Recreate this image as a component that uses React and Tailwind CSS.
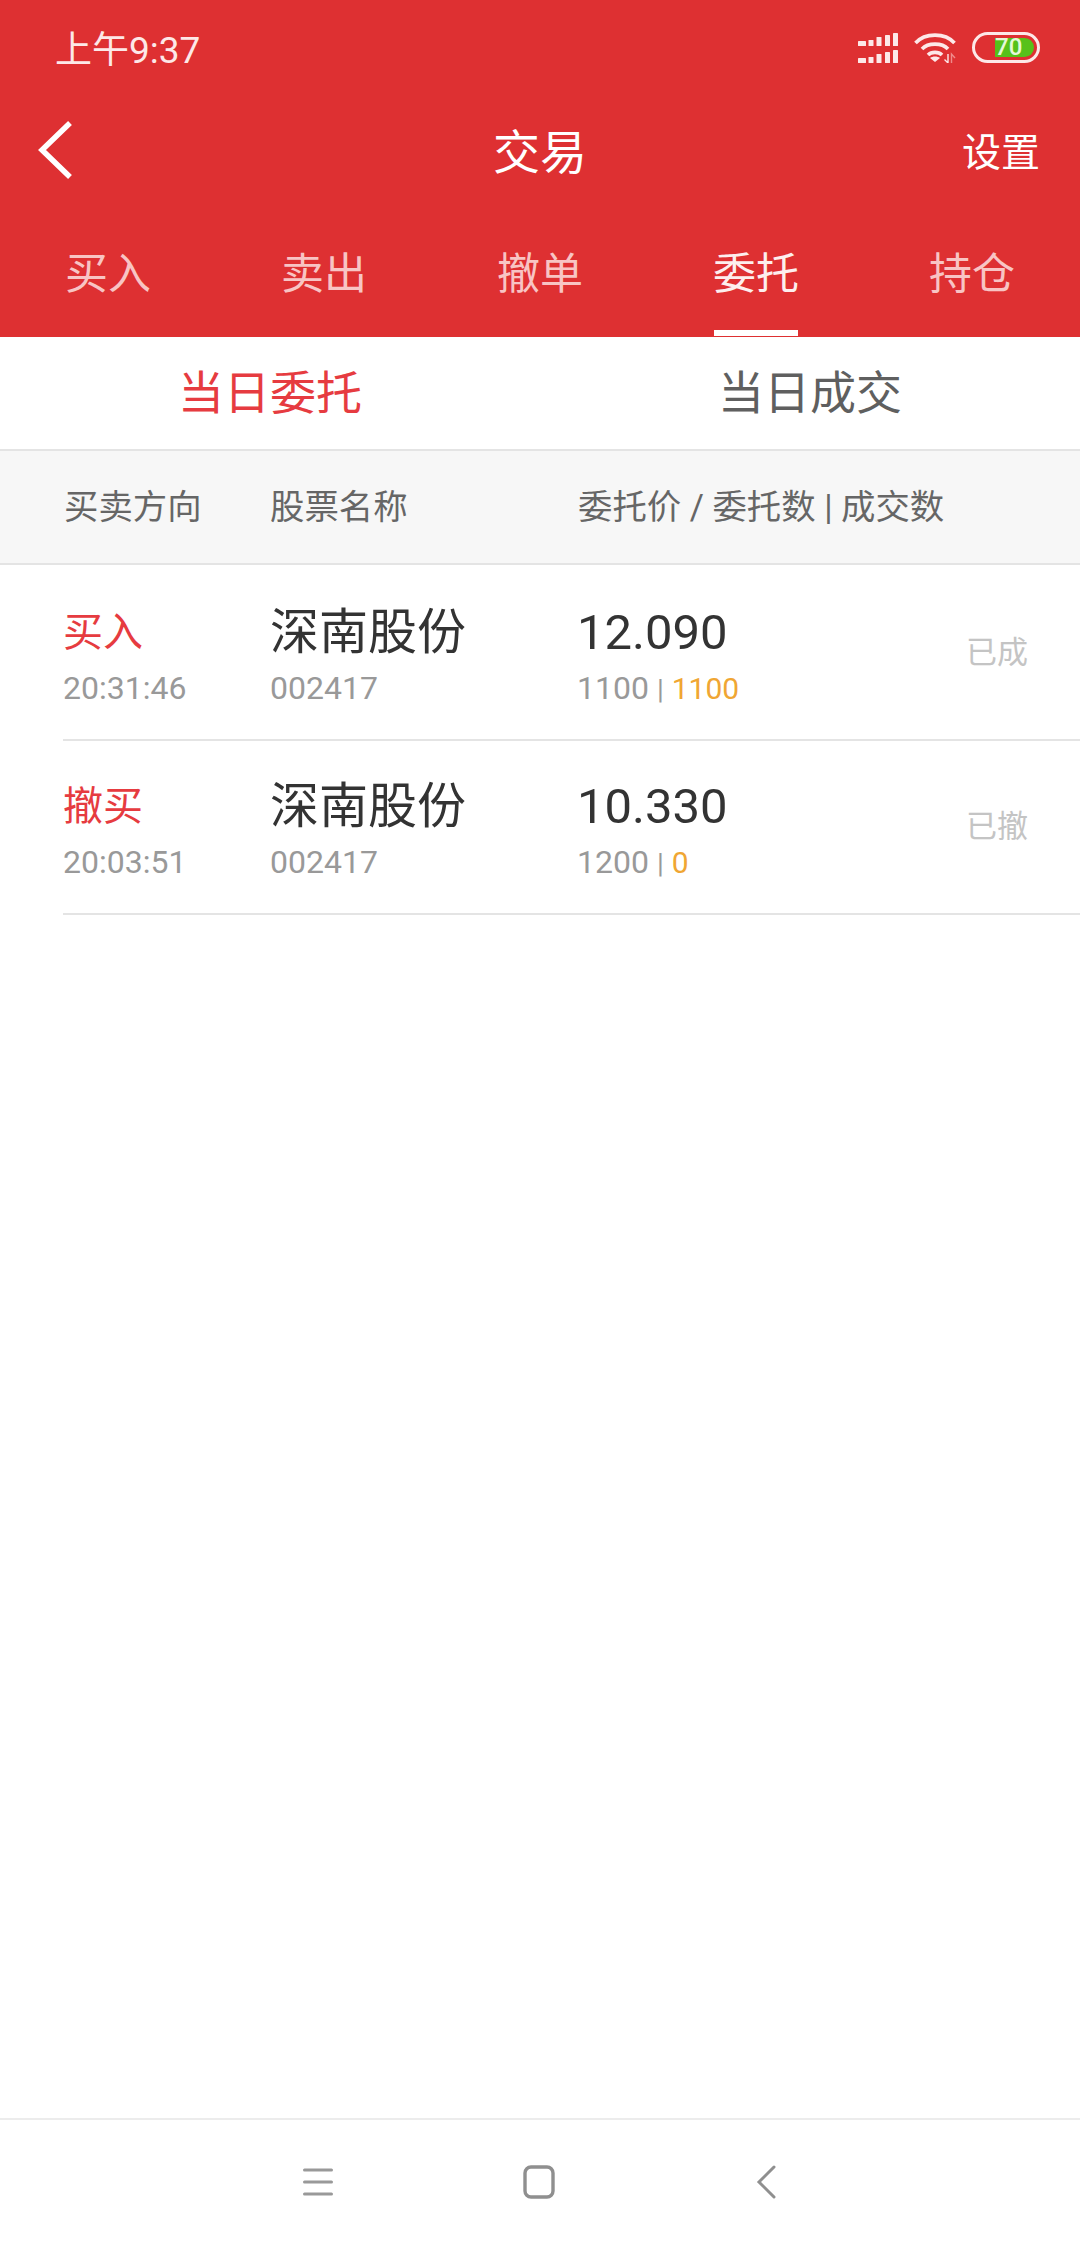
const cjk = { fontFamily: 'Roboto, "Noto Sans CJK SC", sans-serif' };

function Signal() {
  const bars = [
    [0, 8, 5],
    [10.5, 5, 6],
    [18.5, 5, 9],
    [27, 5, 11],
    [35, 5, 13],
  ];
  return (
    <svg width="40" height="31" viewBox="0 0 40 31" fill="#fde8e8">
      {[14, 31].map((base) =>
        bars.map(([x, w, h]) => (
          <rect key={`${base}-${x}`} x={x} y={base - h} width={w} height={h} rx="0.6" />
        ))
      )}
    </svg>
  );
}

function Wifi() {
  return (
    <svg width="42" height="31" viewBox="0 0 42 31" fill="none" stroke="#fde8e8" strokeWidth="3.6">
      <path d="M1.5 11 C11 0.5 31 0.5 40.5 11" />
      <path d="M8 17 C14 10.5 28 10.5 34 17" />
      <path d="M14 23 C17.5 19.5 24.5 19.5 28 23" />
      <path d="M21 30 L16 26 C18.5 24 23.5 24 26 26 Z" fill="#fde8e8" stroke="none" />
      <path d="M34 22 V31 L30.5 27.5" stroke="#fde8e8" strokeWidth="1.4" />
      <path d="M37.5 31 V22 L41 26" stroke="#f08a8a" strokeWidth="1.4" />
    </svg>
  );
}

function Battery() {
  return (
    <div className="relative w-[68px] h-[31px] rounded-full border-[3px] border-[#fde8e8] overflow-hidden">
      <div className="absolute left-[20px] top-[3px] bottom-[3px] right-[3px] bg-[#57c11a] rounded-r-full" />
      <span
        className="absolute left-[20px] top-0 bottom-0 flex items-center text-[24px] font-medium text-[#e6f8d8]"
        style={{ fontFamily: 'Roboto, sans-serif' }}
      >
        70
      </span>
    </div>
  );
}

function Row({ side, time, price, qty, done, status }) {
  return (
    <div className="ml-[63px] h-[174px] flex border-b-2 border-[#e4e4e4]">
      <div className="w-[207px] pt-[40px]">
        <div className="text-[40px] leading-[52px] text-[#e63b40]">{side}</div>
        <div className="text-[32px] leading-[38px] mt-[10px] text-[#999999]">{time}</div>
      </div>
      <div className="w-[307px] pt-[40px]">
        <div className="text-[49px] leading-[52px] text-[#333333]">深南股份</div>
        <div className="text-[32px] leading-[38px] mt-[10px] text-[#999999]">002417</div>
      </div>
      <div className="flex-1 pt-[40px]">
        <div className="text-[49px] leading-[52px] text-[#333333]">{price}</div>
        <div className="text-[32px] leading-[38px] mt-[10px] text-[#999999]">
          {qty} <span className="text-[28px]">|</span> <span className="text-[30px] text-[#f0a633]">{done}</span>
        </div>
      </div>
      <div className="w-[114px] pr-[52px] pt-[56px] shrink-0 whitespace-nowrap text-[31px] leading-[60px] text-[#c4c4c4]">
        {status}
      </div>
    </div>
  );
}

export default function App() {
  const tabs = ['买入', '卖出', '撤单', '委托', '持仓'];
  return (
    <div className="w-[1080px] h-[2248px] flex flex-col bg-white" style={cjk}>
      <div className="h-[337px] bg-[#de3032] flex flex-col shrink-0">
        <div className="h-[96px] pl-[55px] pr-[40px] flex items-center justify-between">
          <span className="text-[37px] pt-[6px] text-[#fde8e8]">上午9:37</span>
          <div className="flex items-center mb-[2px]">
            <Signal />
            <div className="ml-[16px] flex"><Wifi /></div>
            <div className="ml-[16px] flex"><Battery /></div>
          </div>
        </div>
        <div className="h-[106px] pt-[8px] relative flex items-center justify-center">
          <svg className="absolute left-[38px] top-[25px]" width="36" height="58" viewBox="0 0 36 58" fill="none" stroke="#ffffff" strokeWidth="5.5">
            <path d="M32 2 L4 29 L32 56" />
          </svg>
          <span className="text-[47px] text-white">交易</span>
          <span className="absolute right-[40px] text-[39px] text-white">设置</span>
        </div>
        <div className="flex-1 grid grid-cols-5">
          {tabs.map((t, i) => (
            <div key={t} className="flex justify-center">
              <div
                className={`w-[84px] flex justify-center pt-[42px] whitespace-nowrap text-[43px] leading-[60px] ${
                  i === 3 ? 'text-[#fdeeee] border-b-[6px] border-white mb-[1px]' : 'text-[#f8c4c4]'
                }`}
              >
                {t}
              </div>
            </div>
          ))}
        </div>
      </div>

      <div className="h-[112px] grid grid-cols-2 items-center text-center text-[46px]">
        <div className="text-[#e63b40]">当日委托</div>
        <div className="text-[#5f5f5f]">当日成交</div>
      </div>

      <div className="h-[116px] pt-[2px] bg-[#f7f7f7] border-y-2 border-[#e4e4e4] flex items-center pl-[64px] text-[34.4px] text-[#666666]">
        <div className="w-[206px]">买卖方向</div>
        <div className="w-[308px]">股票名称</div>
        <div>委托价 / 委托数 | 成交数</div>
      </div>

      <div className="pt-[2px]">
        <Row side="买入" time="20:31:46" price="12.090" qty="1100" done="1100" status="已成" />
        <Row side="撤买" time="20:03:51" price="10.330" qty="1200" done="0" status="已撤" />
      </div>

      <div className="flex-1" />

      <div className="h-[130px] pb-[4px] pr-[2px] border-t-2 border-[#ececec] flex items-center justify-center bg-white">
        <svg width="30" height="28" viewBox="0 0 30 28" stroke="#999999" strokeWidth="3" strokeLinecap="round">
          <path d="M1.5 2 H28.5 M1.5 14 H28.5 M1.5 26 H28.5" />
        </svg>
        <svg className="ml-[190px]" width="32" height="34" viewBox="0 0 32 34" fill="none" stroke="#8f8f8f" strokeWidth="3.4">
          <rect x="2" y="2" width="28" height="30" rx="6" />
        </svg>
        <svg className="ml-[201px]" width="20" height="34" viewBox="0 0 20 34" fill="none" stroke="#8f8f8f" strokeWidth="3" strokeLinecap="round">
          <path d="M18 2 L3 17 L18 32" />
        </svg>
      </div>
    </div>
  );
}
